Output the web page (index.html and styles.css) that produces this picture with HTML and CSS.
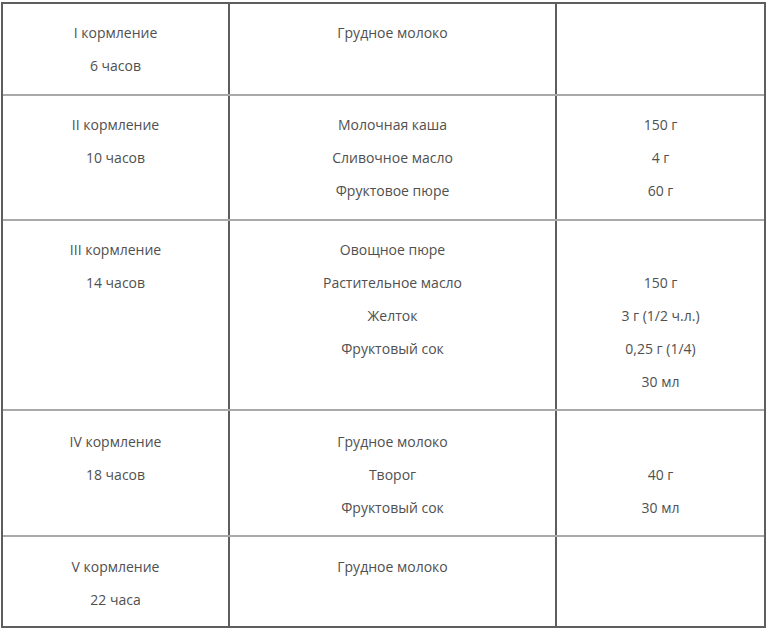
FILE: index.html
```html
<!DOCTYPE html>
<html lang="ru">
<head>
<meta charset="utf-8">
<link rel="stylesheet" href="styles.css">
</head>
<body>
<div class="table">
  <div class="row r1">
    <div class="cell"><div>I кормление</div><div>6 часов</div></div>
    <div class="cell"><div>Грудное молоко</div></div>
    <div class="cell"></div>
  </div>
  <div class="row r2">
    <div class="cell"><div>II кормление</div><div>10 часов</div></div>
    <div class="cell"><div>Молочная каша</div><div>Сливочное масло</div><div>Фруктовое пюре</div></div>
    <div class="cell"><div>150 г</div><div>4 г</div><div>60 г</div></div>
  </div>
  <div class="row r3">
    <div class="cell"><div>III кормление</div><div>14 часов</div></div>
    <div class="cell"><div>Овощное пюре</div><div>Растительное масло</div><div>Желток</div><div>Фруктовый сок</div></div>
    <div class="cell"><div>&nbsp;</div><div>150 г</div><div>3 г (1/2 ч.л.)</div><div>0,25 г (1/4)</div><div>30 мл</div></div>
  </div>
  <div class="row r4">
    <div class="cell"><div>IV кормление</div><div>18 часов</div></div>
    <div class="cell"><div>Грудное молоко</div><div>Творог</div><div>Фруктовый сок</div></div>
    <div class="cell"><div>&nbsp;</div><div>40 г</div><div>30 мл</div></div>
  </div>
  <div class="row r5">
    <div class="cell"><div>V кормление</div><div>22 часа</div></div>
    <div class="cell"><div>Грудное молоко</div></div>
    <div class="cell"></div>
  </div>
</div>
</body>
</html>
```

FILE: styles.css
```css
html, body {
  margin: 0;
  padding: 0;
  background: #ffffff;
}
body {
  font-family: "Open Sans", "Noto Sans", sans-serif;
  font-size: 14px;
  color: #505050;
}
.table {
  margin: 2px 0 0 1px;
  width: 765px;
  box-sizing: border-box;
  border: 2px solid #5e5e5e;
  display: flex;
  flex-direction: column;
}
.row {
  display: grid;
  grid-template-columns: 227px 327px 1fr;
  border-bottom: 2px solid #a9a9a9;
}
.row:last-child {
  border-bottom: none;
}
.r1 { height: 90px; }
.r2 { height: 123px; }
.r3 { height: 188px; }
.r4 { height: 124px; }
.r5 { height: 89px; }
.cell {
  box-sizing: border-box;
  border-right: 2px solid #5e5e5e;
  text-align: center;
  padding-top: 12px;
  line-height: 33px;
}
.cell:last-child {
  border-right: none;
}
.r4 .cell { padding-top: 14px; }
.r5 .cell { padding-top: 13px; }
```
